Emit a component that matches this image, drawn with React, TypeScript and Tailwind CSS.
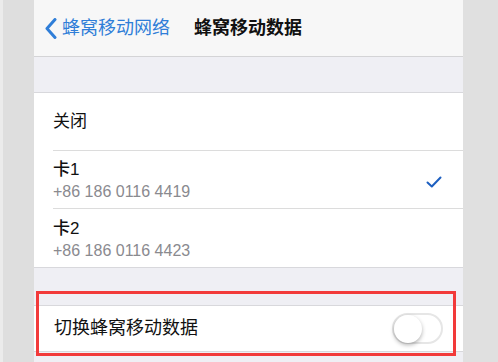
import React from 'react';

const font = { fontFamily: '"Liberation Sans", "Noto Sans CJK SC", sans-serif' };

const SimRow: React.FC<{ name: string; phone: string; checked?: boolean; last?: boolean }> = ({
  name,
  phone,
  checked,
  last,
}) => (
  <div className="flex h-[58px] items-center pl-[19px]">
    <div className={`flex h-full flex-1 items-center pr-[21px] ${last ? '' : 'border-b border-[#dcdcdc]'}`}>
      <div className="flex flex-1 flex-col gap-[2px] pt-[3px]">
        <span className="text-[17px] font-medium leading-[20px] text-[#111]">{name}</span>
        <span className="text-[16px] leading-[20px] text-[#8a8a8f]">{phone}</span>
      </div>
      {checked && (
        <svg width="16" height="12" viewBox="0 0 16 12" fill="none" className="mt-[4px]">
          <path d="M1.5 6.5 L5.8 10.5 L14.5 1.5" stroke="#1d5fc0" strokeWidth="2" strokeLinecap="round" strokeLinejoin="round" />
        </svg>
      )}
    </div>
  </div>
);

const App: React.FC = () => {
  return (
    <div className="relative flex h-[362px] w-[498px] overflow-hidden bg-[#dedede]" style={font}>
      <div className="w-[34px] border-l-[3px] border-[#ebebeb]" />

      <div className="flex w-[429px] flex-col bg-[#efeff4]">
        {/* nav bar */}
        <div className="flex h-[57px] items-center border-b border-[#d4d4d6] bg-[#f7f7f7]">
          <div className="flex items-center pl-[11px] text-[#2f7ed8]">
            <svg width="12" height="21" viewBox="0 0 12 21" fill="none">
              <path d="M10 1.5 L2 10.5 L10 19.5" stroke="#2f7ed8" strokeWidth="3" strokeLinecap="round" strokeLinejoin="round" />
            </svg>
            <span className="ml-[5px] text-[18px] leading-none">蜂窝移动网络</span>
          </div>
          <span className="ml-[24px] text-[18px] font-semibold leading-none text-[#111]">蜂窝移动数据</span>
        </div>

        <div className="h-[36px] border-b border-[#d8d8dc]" />

        {/* sim list */}
        <div className="flex flex-col border-b border-[#d8d8dc] bg-white">
          <div className="flex h-[58px] items-center pl-[19px]">
            <div className="flex h-full flex-1 items-center border-b border-[#dcdcdc]">
              <span className="text-[17px] text-[#111]">关闭</span>
            </div>
          </div>
          <SimRow name="卡1" phone="+86 186 0116 4419" checked />
          <SimRow name="卡2" phone="+86 186 0116 4423" last />
        </div>

        <div className="h-[38px] border-b border-[#d8d8dc]" />

        <div className="flex h-[46px] items-center justify-between border-b border-[#d8d8dc] bg-white pl-[20px] pr-[20px]">
          <span className="text-[18px] text-[#111]">切换蜂窝移动数据</span>
          <div className="flex h-[31px] w-[51px] items-center rounded-full border-2 border-[#e6e6e6] bg-white">
            <div className="h-[28px] w-[28px] rounded-full bg-white shadow-[0_2px_4px_rgba(0,0,0,0.3)]" />
          </div>
        </div>
      </div>

      <div className="flex-1 bg-[#e0e0e0]" />

      {/* annotation */}
      <div className="absolute left-[36px] top-[291px] h-[65px] w-[420px] border-[3px] border-[#f23a3a]" />
    </div>
  );
};

export default App;
